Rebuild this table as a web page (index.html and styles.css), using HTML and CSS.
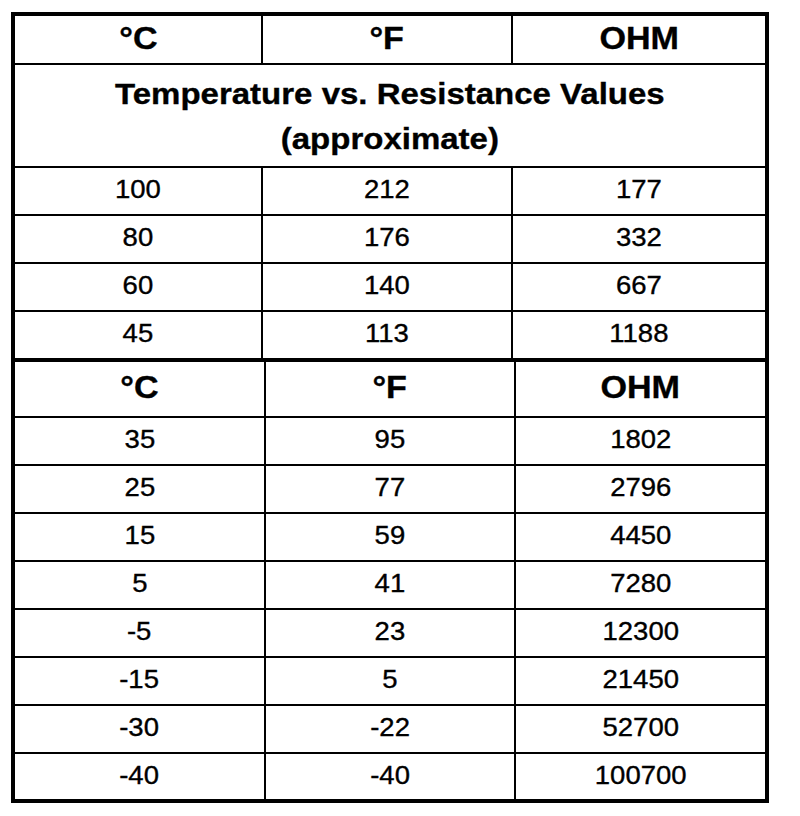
FILE: index.html
```html
<!DOCTYPE html>
<html lang="en">
<head>
<meta charset="utf-8">
<title>Temperature vs. Resistance Values</title>
<link rel="stylesheet" href="styles.css">
</head>
<body>
<div class="sheet">
  <div class="block upper">
    <div class="cell head"><span class="t">°C</span></div>
    <div class="cell head"><span class="t">°F</span></div>
    <div class="cell head"><span class="t">OHM</span></div>
    <div class="cell title"><span class="t">Temperature vs. Resistance Values<br>(approximate)</span></div>
    <div class="cell"><span class="t">100</span></div>
    <div class="cell"><span class="t">212</span></div>
    <div class="cell"><span class="t">177</span></div>
    <div class="cell"><span class="t">80</span></div>
    <div class="cell"><span class="t">176</span></div>
    <div class="cell"><span class="t">332</span></div>
    <div class="cell"><span class="t">60</span></div>
    <div class="cell"><span class="t">140</span></div>
    <div class="cell"><span class="t">667</span></div>
    <div class="cell"><span class="t">45</span></div>
    <div class="cell"><span class="t">113</span></div>
    <div class="cell"><span class="t">1188</span></div>
  </div>
  <div class="block lower">
    <div class="cell head"><span class="t">°C</span></div>
    <div class="cell head"><span class="t">°F</span></div>
    <div class="cell head"><span class="t">OHM</span></div>
    <div class="cell"><span class="t">35</span></div>
    <div class="cell"><span class="t">95</span></div>
    <div class="cell"><span class="t">1802</span></div>
    <div class="cell"><span class="t">25</span></div>
    <div class="cell"><span class="t">77</span></div>
    <div class="cell"><span class="t">2796</span></div>
    <div class="cell"><span class="t">15</span></div>
    <div class="cell"><span class="t">59</span></div>
    <div class="cell"><span class="t">4450</span></div>
    <div class="cell"><span class="t">5</span></div>
    <div class="cell"><span class="t">41</span></div>
    <div class="cell"><span class="t">7280</span></div>
    <div class="cell"><span class="t">-5</span></div>
    <div class="cell"><span class="t">23</span></div>
    <div class="cell"><span class="t">12300</span></div>
    <div class="cell"><span class="t">-15</span></div>
    <div class="cell"><span class="t">5</span></div>
    <div class="cell"><span class="t">21450</span></div>
    <div class="cell"><span class="t">-30</span></div>
    <div class="cell"><span class="t">-22</span></div>
    <div class="cell"><span class="t">52700</span></div>
    <div class="cell"><span class="t">-40</span></div>
    <div class="cell"><span class="t">-40</span></div>
    <div class="cell"><span class="t">100700</span></div>
  </div>
</div>
</body>
</html>
```

FILE: styles.css
```css
html, body {
  margin: 0;
  padding: 0;
  background: #ffffff;
}

body {
  font-family: "Liberation Sans", Arial, sans-serif;
  color: #000000;
}

.sheet {
  margin: 12px 0 0 11px;
  width: 750px;
  border: 4px solid #000000;
}

.block {
  display: grid;
}

.upper {
  grid-template-columns: 248px 250px 1fr;
  border-bottom: 4px solid #000000;
}

.lower {
  grid-template-columns: 251px 250px 1fr;
}

.cell {
  display: flex;
  align-items: center;
  justify-content: center;
  height: 46px;
  border-bottom: 2px solid #000000;
  font-size: 25px;
  line-height: 1;
  -webkit-text-stroke: 0.35px #000000;
}

.cell:nth-child(3n+1),
.cell:nth-child(3n+2) {
  border-right: 2px solid #000000;
}

.upper .cell:nth-child(n+4) {
  border-right: 0;
}

.upper .cell:nth-child(3n+5),
.upper .cell:nth-child(3n+6) {
  border-right: 2px solid #000000;
}

.block .cell:nth-last-child(-n+3) {
  border-bottom: 0;
}

.lower .cell:nth-last-child(-n+3) {
  height: 45px;
}

.t {
  display: inline-block;
  transform: scaleX(1.1);
  padding-bottom: 3px;
}

.head {
  font-weight: bold;
  font-size: 31px;
}

.upper .head {
  height: 47px;
}

.lower .head {
  height: 54px;
}

.title {
  grid-column: 1 / -1;
  height: 101px;
  font-weight: bold;
  font-size: 30px;
  line-height: 45px;
  text-align: center;
}

.title .t {
  padding-bottom: 0;
}
```
